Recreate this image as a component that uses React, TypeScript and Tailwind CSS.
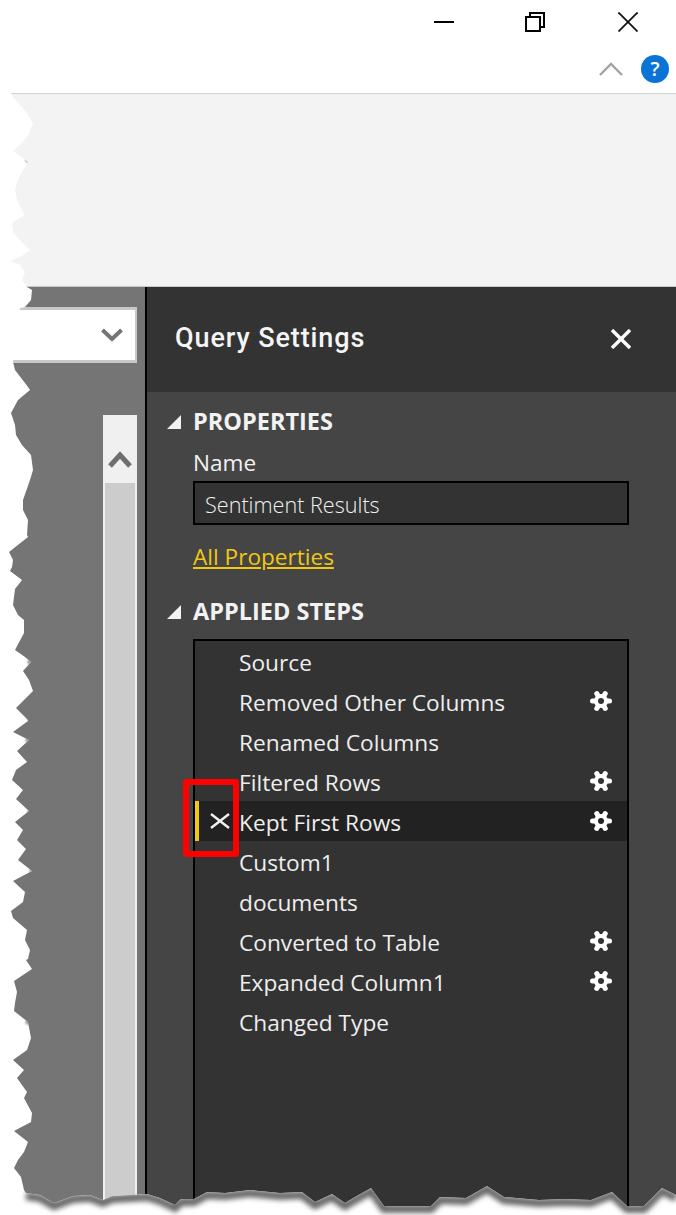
const leftEdge =
  "11,93 13,97 20,105 27,113 33,124 28,135 22,143 13,151 20,156 28,162 22,172 17,182 15,190 17,200 22,210 25,215 20,218 12,223 13,232 20,240 30,250 22,256 10,261 20,265 25,272 22,280 27,287 32,290 31,300 25,307 20,308 13,362 15,370 28,387 30,390 18,400 11,413 15,425 16,435 22,445 31,455 33,470 30,480 10,483 30,480 23,500 23,510 28,520 27,535 28,537 9,552 13,560 12,567 10,571 22,580 15,589 14,597 13,605 18,615 24,620 24,633 15,650 25,657 31,662 23,671 29,680 33,691 16,708 27,719 28,721 13,732 29,740 17,751 27,762 16,770 12,780 23,790 16,799 29,811 15,822 23,830 17,840 26,849 18,860 32,871 13,881 25,892 23,902 11,911 13,918 27,930 25,940 30,950 28,959 26,960 32,969 14,981 17,992 15,1003 14,1011 28,1022 31,1038 27,1050 13,1060 24,1070 17,1078 27,1092 24,1098 32,1113 31,1122 14,1131 28,1142 24,1152 18,1160 14,1168 21,1177 24,1190";

const bottomEdge =
  "26,1193 40,1195 54,1203 73,1196 90,1195 103,1200 112,1196 147,1194 160,1198 175,1205 181,1199 194,1199 207,1192 225,1193 250,1190 280,1193 302,1192 315,1202 332,1194 345,1203 355,1197 371,1188 384,1206 431,1206 440,1197 466,1198 487,1186 504,1197 539,1200 565,1199 591,1200 612,1192 627,1206 644,1206 662,1188 676,1195";

const tearSpots = [
  [28, 160],
  [27, 241],
  [30, 662],
  [28, 740],
  [30, 811],
  [32, 871],
  [28, 1022],
];

function Gear({ hole }: { hole: string }) {
  return (
    <svg width="24" height="24" viewBox="0 0 24 24" className="shrink-0">
      <g stroke="#fff" strokeWidth="5" strokeLinecap="round">
        <line x1="3.5" y1="12" x2="20.5" y2="12" />
        <line x1="7.75" y1="4.6" x2="16.25" y2="19.4" />
        <line x1="16.25" y1="4.6" x2="7.75" y2="19.4" />
      </g>
      <circle cx="12" cy="12" r="7" fill="#fff" />
      <circle cx="12" cy="12" r="3" fill={hole} />
    </svg>
  );
}

function Triangle() {
  return (
    <svg width="14" height="14" viewBox="0 0 14 14" className="shrink-0">
      <polygon points="0,14 14,14 14,0" fill="#f2f2f2" />
    </svg>
  );
}

const steps = [
  { name: "Source" },
  { name: "Removed Other Columns", gear: true },
  { name: "Renamed Columns" },
  { name: "Filtered Rows", gear: true },
  { name: "Kept First Rows", gear: true, selected: true },
  { name: "Custom1" },
  { name: "documents" },
  { name: "Converted to Table", gear: true },
  { name: "Expanded Column1", gear: true },
  { name: "Changed Type" },
];

export default function App() {
  return (
    <div className="relative flex h-[1215px] w-[676px] flex-col overflow-hidden bg-white font-['Open_Sans',sans-serif]">
      {/* title bar */}
      <div className="box-content h-[93px] shrink-0 border-b border-[#d2d2d2]">
        <div className="flex h-[44px] items-center pl-[434px]">
          <svg width="20" height="20" viewBox="0 0 20 20">
            <line x1="0" y1="10" x2="20" y2="10" stroke="#000" strokeWidth="2" />
          </svg>
          <svg width="20" height="20" viewBox="0 0 20 20" className="ml-[71px]" fill="none" stroke="#000" strokeWidth="2">
            <rect x="1" y="5" width="14" height="14" />
            <path d="M5 5V1H19V15H15" />
          </svg>
          <svg width="20" height="20" viewBox="0 0 20 20" className="ml-[73px]" stroke="#111" strokeWidth="1.8">
            <line x1="0.5" y1="0.5" x2="19.5" y2="19.5" />
            <line x1="19.5" y1="0.5" x2="0.5" y2="19.5" />
          </svg>
        </div>
        <div className="mt-[11px] flex items-center pl-[599px]">
          <svg width="24" height="14" viewBox="0 0 24 14" fill="none" stroke="#a3a3a3" strokeWidth="2.4">
            <path d="M1 13L12 2L23 13" />
          </svg>
          <div className="ml-[18px] flex h-[28px] w-[28px] items-center justify-center rounded-full bg-[#0a74d6] text-[20px] font-semibold text-white">
            ?
          </div>
        </div>
      </div>

      {/* ribbon */}
      <div className="h-[193px] shrink-0 border-b border-[#c8c8c8] bg-[#f3f3f3]" />

      <div className="flex min-h-0 flex-1">
        {/* query preview */}
        <div className="flex w-[145px] shrink-0 flex-col bg-[#757575] pr-2 pt-[20px]">
          <div className="flex h-[56px] shrink-0 items-center justify-end border-y-[3px] border-r-[2px] border-[#c8c8c8] bg-white pr-[12px]">
            <svg width="22" height="14" viewBox="0 0 22 14" fill="none" stroke="#757575" strokeWidth="4">
              <path d="M1.5 2L11 11L20.5 2" />
            </svg>
          </div>
          <div className="ml-[103px] mt-[52px] flex min-h-0 flex-1 flex-col bg-[#f0f0f0] px-[2px]">
            <div className="flex h-[68px] shrink-0 items-start justify-center pt-[34px]">
              <svg width="24" height="20" viewBox="0 0 24 20" fill="none" stroke="#6e6e6e" strokeWidth="5">
                <path d="M2 17L12 6L22 17" />
              </svg>
            </div>
            <div className="flex-1 bg-[#cccccc]" />
          </div>
        </div>

        {/* query settings */}
        <div className="flex min-w-0 flex-1 flex-col border-l-2 border-black bg-[#454545]">
          <div className="flex h-[105px] shrink-0 items-center justify-between bg-[#333333] pb-[2px] pl-[28px] pr-[45px]">
            <span className="font-['Roboto',sans-serif] text-[27px] font-medium tracking-[0.9px] text-[#f5f5f5]">
              Query Settings
            </span>
            <svg width="20" height="20" viewBox="0 0 20 20" stroke="#fff" strokeWidth="3.4">
              <line x1="1" y1="1" x2="19" y2="19" />
              <line x1="19" y1="1" x2="1" y2="19" />
            </svg>
          </div>

          <div className="flex min-h-0 flex-1 flex-col pl-[20px] pr-[47px] text-[#f2f2f2]">
            <div className="mt-[14px] flex h-[32px] shrink-0 items-center gap-[12px]">
              <Triangle />
              <span className="text-[23.5px] font-bold leading-none">PROPERTIES</span>
            </div>
            <div className="ml-[26px] mt-[9px] h-[32px] shrink-0 text-[22.6px] leading-[32px]">Name</div>
            <div className="ml-[26px] mt-[2px] flex h-[44px] shrink-0 items-center border-2 border-black bg-[#333333] pl-[10px] pt-[4px] text-[21.6px] font-light text-[#f2f2f2]">
              Sentiment Results
            </div>
            <div className="ml-[26px] mt-[16px] h-[32px] shrink-0 text-[22.6px] leading-[32px] text-[#f2c811] underline">
              All Properties
            </div>

            <div className="mt-[23px] flex h-[32px] shrink-0 items-center gap-[12px]">
              <Triangle />
              <span className="text-[23.5px] font-bold leading-none">APPLIED STEPS</span>
            </div>
            <div className="ml-[26px] mt-[11px] min-h-0 flex-1 border-2 border-b-0 border-black bg-[#333333]">
              {steps.map((step) => (
                <div
                  key={step.name}
                  className={
                    step.selected
                      ? "relative flex h-[40px] items-center bg-[#222222] pr-[14px]"
                      : "relative flex h-[40px] items-center pr-[14px]"
                  }
                >
                  <div className="flex h-full w-[44px] shrink-0 items-center">
                    {step.selected && (
                      <>
                        <div className="h-full w-[4px] bg-[#f2c811]" />
                        <svg width="20" height="16" viewBox="0 0 20 16" className="ml-[11px]" stroke="#f2f2f2" strokeWidth="2.4">
                          <line x1="1" y1="1" x2="19" y2="15" />
                          <line x1="19" y1="1" x2="1" y2="15" />
                        </svg>
                      </>
                    )}
                  </div>
                  <span className="flex-1 pt-[4px] text-[22.7px] leading-none text-[#eeeeee]">{step.name}</span>
                  {step.gear && <Gear hole={step.selected ? "#222222" : "#333333"} />}
                  {step.selected && (
                    <div className="absolute left-[-12px] top-[-22px] h-[78px] w-[56px] rounded-[3px] border-[6px] border-[#ff0000]" />
                  )}
                </div>
              ))}
            </div>
          </div>
        </div>
      </div>

      {/* torn edges */}
      <svg width="676" height="1215" viewBox="0 0 676 1215" className="absolute left-0 top-0">
        <defs>
          <clipPath id="outside">
            <polygon points={`0,0 ${leftEdge} ${bottomEdge} 676,1215 0,1215`} />
          </clipPath>
          <filter id="soft" x="-5%" y="-50%" width="110%" height="200%">
            <feGaussianBlur stdDeviation="2.5" />
          </filter>
          <filter id="spot" x="-100%" y="-100%" width="300%" height="300%">
            <feGaussianBlur stdDeviation="1.2" />
          </filter>
        </defs>
        <polygon points={`0,0 11,0 ${leftEdge} ${bottomEdge} 676,1215 0,1215`} fill="#fff" />
        <g clipPath="url(#outside)">
          <polyline points={bottomEdge} transform="translate(0 3)" fill="none" stroke="#666666" strokeWidth="8" filter="url(#soft)" />
          {tearSpots.map(([x, y]) => (
            <circle key={y} cx={x} cy={y} r="2.5" fill="#8a8a8a" filter="url(#spot)" />
          ))}
        </g>
      </svg>
    </div>
  );
}
